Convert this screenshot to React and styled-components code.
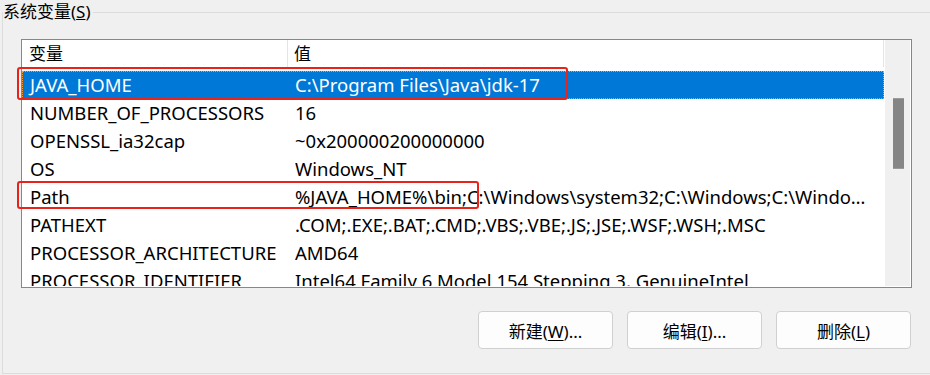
import React from "react";
import styled, { createGlobalStyle } from "styled-components";

const Global = createGlobalStyle`
  html, body { margin: 0; padding: 0; background: #f0f0f0; overflow: hidden; }
  body { font-family: "Noto Sans", "Noto Sans CJK SC", sans-serif; color: #000; }
`;

const Page = styled.div`
  width: 930px;
  height: 375px;
  overflow: hidden;
`;

const Group = styled.fieldset`
  margin: 0 -40px 0 2px;
  padding: 15px 0 24px 18px;
  border: 1px solid #dcdcdc;
  height: 374px;
  box-sizing: border-box;
  display: flex;
  flex-direction: column;
  align-items: flex-start;
`;

const Legend = styled.legend`
  padding: 0 2px 0 0;
  margin-left: -18px;
  font-size: 17px;
  line-height: 24px;
  height: 24px;
`;

const ListWrap = styled.div`
  position: relative;
  width: 891px;
  height: 249px;
`;

const ListBox = styled.div`
  box-sizing: border-box;
  width: 100%;
  height: 100%;
  border: 1px solid #828790;
  background: #fff;
  padding: 0 1px 1px 0;
  display: flex;
  overflow: hidden;
`;

const Content = styled.div`
  flex: 1;
  overflow: hidden;
  display: flex;
  flex-direction: column;
`;

const Header = styled.div`
  display: flex;
  height: 28px;
  flex: none;
  margin-bottom: 3px;
`;

const HeadCell = styled.div`
  box-sizing: border-box;
  width: ${(p) => p.$w};
  flex: ${(p) => (p.$grow ? 1 : "none")};
  padding-left: ${(p) => p.$pad}px;
  border-right: 1px solid #e5e5e5;
  font-size: 17px;
  line-height: 28px;
  height: 27px;
`;

const Row = styled.div`
  box-sizing: border-box;
  display: flex;
  height: 28px;
  flex: none;
  background: ${(p) => (p.$sel ? "#0078d7" : "transparent")};
  color: ${(p) => (p.$sel ? "#fff" : "#000")};
  border: 1px dotted ${(p) => (p.$sel ? "#f29a3a" : "transparent")};
`;

const Cell = styled.div`
  box-sizing: border-box;
  width: ${(p) => p.$w};
  flex: ${(p) => (p.$grow ? 1 : "none")};
  min-width: 0;
  padding-left: ${(p) => p.$pad}px;
  padding-right: ${(p) => (p.$grow ? 12 : 0)}px;
  font-size: 18.5px;
  line-height: 26px;
  white-space: nowrap;
  overflow: hidden;
  text-overflow: ellipsis;
`;

const ScrollBar = styled.div`
  width: 26px;
  flex: none;
  background: #f0f0f0;
  border-left: 1px solid #fff;
  padding-top: 58px;
  box-sizing: border-box;
  display: flex;
  justify-content: center;
`;

const Thumb = styled.div`
  width: 11px;
  height: 71px;
  margin-left: 1px;
  background: #858585;
  border-top: 1px solid #9a9a9a;
  border-bottom: 1px solid #9a9a9a;
  box-sizing: border-box;
`;

const Mark = styled.div`
  position: absolute;
  left: -4px;
  top: ${(p) => p.$top}px;
  width: ${(p) => p.$w}px;
  height: ${(p) => p.$h}px;
  border: 2px solid #e8231c;
  border-radius: 3px;
  box-sizing: border-box;
  pointer-events: none;
`;

const Buttons = styled.div`
  display: flex;
  gap: 14px;
  width: 891px;
  justify-content: flex-end;
  padding-right: 1px;
  box-sizing: border-box;
  margin-top: 23px;
`;

const Button = styled.button`
  width: 135px;
  height: 38px;
  box-sizing: border-box;
  border: 1px solid #d0d0d0;
  border-radius: 4px;
  background: #fdfdfd;
  font-family: "Noto Sans", "Noto Sans CJK SC", sans-serif;
  font-size: 17px;
  color: #000;
  padding: 0;
  u { text-decoration-thickness: 1px; text-underline-offset: 2px; }
`;

const rows = [
  ["JAVA_HOME", "C:\\Program Files\\Java\\jdk-17", true],
  ["NUMBER_OF_PROCESSORS", "16"],
  ["OPENSSL_ia32cap", "~0x200000200000000"],
  ["OS", "Windows_NT"],
  [
    "Path",
    "%JAVA_HOME%\\bin;C:\\Windows\\system32;C:\\Windows;C:\\Windows\\System32\\Wbem;C:\\Windows\\System32\\WindowsPowerShell\\v1.0\\",
  ],
  ["PATHEXT", ".COM;.EXE;.BAT;.CMD;.VBS;.VBE;.JS;.JSE;.WSF;.WSH;.MSC"],
  ["PROCESSOR_ARCHITECTURE", "AMD64"],
  ["PROCESSOR_IDENTIFIER", "Intel64 Family 6 Model 154 Stepping 3, GenuineIntel"],
  ["PROCESSOR_LEVEL", "6"],
];

export default function App() {
  return (
    <Page>
      <Global />
      <Group>
        <Legend>
          系统变量(<u>S</u>)
        </Legend>
        <ListWrap>
          <ListBox>
            <Content>
              <Header>
                <HeadCell $w="266px" $pad={7}>变量</HeadCell>
                <HeadCell $grow $pad={6}>值</HeadCell>
              </Header>
              {rows.map(([k, v, sel]) => (
                <Row key={k} $sel={sel}>
                  <Cell $w="265px" $pad={7}>{k}</Cell>
                  <Cell $grow $pad={7}>{v}</Cell>
                </Row>
              ))}
            </Content>
            <ScrollBar>
              <Thumb />
            </ScrollBar>
          </ListBox>
          <Mark $top={28} $w={551} $h={33} />
          <Mark $top={142} $w={462} $h={28} />
        </ListWrap>
        <Buttons>
          <Button>
            新建(<u>W</u>)...
          </Button>
          <Button>
            编辑(<u>I</u>)...
          </Button>
          <Button>
            删除(<u>L</u>)
          </Button>
        </Buttons>
      </Group>
    </Page>
  );
}
